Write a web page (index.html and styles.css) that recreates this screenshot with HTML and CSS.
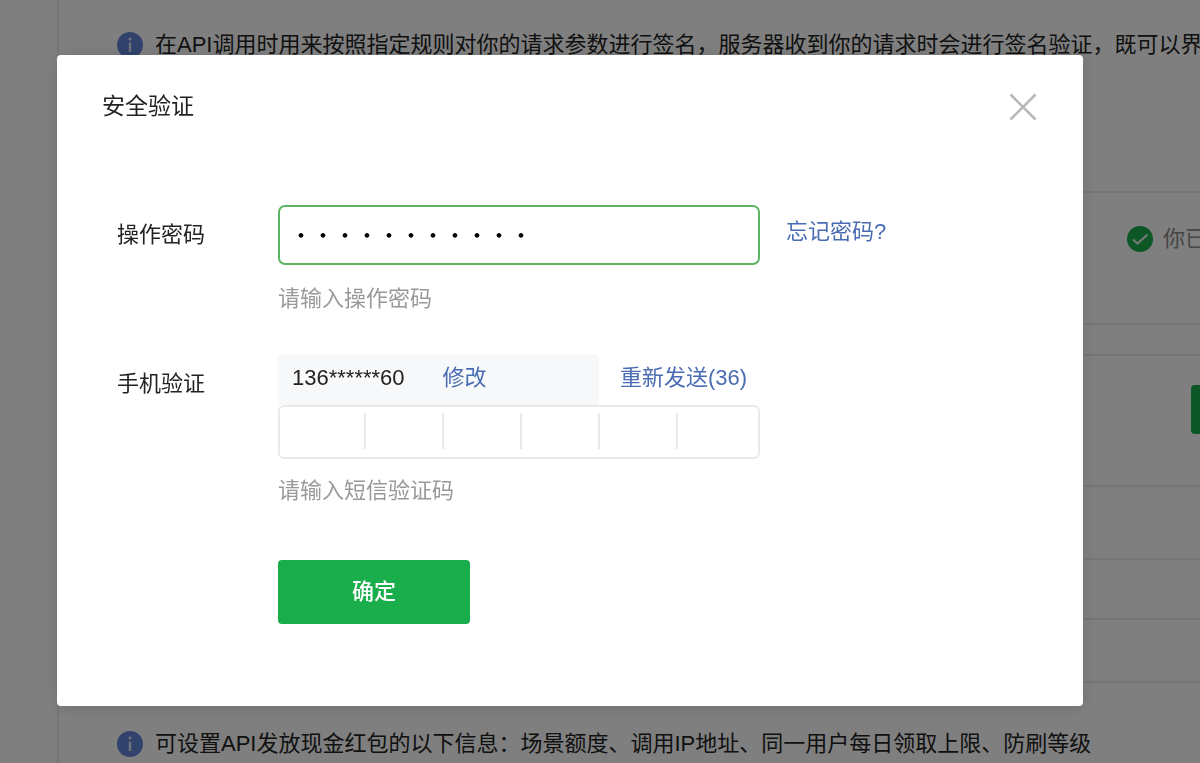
FILE: index.html
```html
<!DOCTYPE html>
<html lang="zh-CN">
<head>
  <meta charset="UTF-8">
  <title>安全验证</title>
  <meta name="viewport" content="width=device-width, initial-scale=1.0">
  <link rel="stylesheet" href="styles.css">
</head>
<body>

  <main class="page">
    <p class="tip">
      <svg class="icon" viewBox="0 0 26 26">
        <circle cx="13" cy="13" r="13" fill="#6287d8"/>
        <circle cx="13" cy="7" r="1.5" fill="#dde5f6"/>
        <path d="M13 10.5v9.5" stroke="#dde5f6" stroke-width="2.4"/>
      </svg>
      <span>在API调用时用来按照指定规则对你的请求参数进行签名，服务器收到你的请求时会进行签名验证，既可以界定</span>
    </p>

    <section class="box">
      <div class="row row-status">
        <div class="status">
          <svg class="icon" viewBox="0 0 26 26">
            <circle cx="13" cy="13" r="13" fill="#1aad4b"/>
            <path d="M6 13.5l4.5 4 10-9" fill="none" stroke="#e4f5ea" stroke-width="2.2"/>
          </svg>
          <span>你已安装</span>
        </div>
      </div>
    </section>

    <section class="box">
      <div class="row row-action"><button class="btn-side" type="button" aria-label="设置"></button></div>
      <div class="row row-tall"></div>
      <div class="row row-mid"></div>
      <div class="row row-last"></div>
    </section>

    <p class="tip">
      <svg class="icon" viewBox="0 0 26 26">
        <circle cx="13" cy="13" r="13" fill="#6287d8"/>
        <circle cx="13" cy="7" r="1.5" fill="#dde5f6"/>
        <path d="M13 10.5v9.5" stroke="#dde5f6" stroke-width="2.4"/>
      </svg>
      <span>可设置API发放现金红包的以下信息：场景额度、调用IP地址、同一用户每日领取上限、防刷等级</span>
    </p>
  </main>

  <div class="mask">
    <div class="dialog" role="dialog" aria-labelledby="title">
      <div class="dialog-head">
        <h1 id="title">安全验证</h1>
        <button class="close" type="button" aria-label="关闭">
          <svg viewBox="0 0 28 28">
            <path d="M1.5 1.5l25 25M26.5 1.5l-25 25" stroke="#b8b8b8" stroke-width="2.6"/>
          </svg>
        </button>
      </div>

      <form class="form">
        <div class="field">
          <label class="label" for="password">操作密码</label>
          <div class="control">
            <div class="line">
              <input class="password" type="password" id="password" value="abcdefghijk">
              <a class="forgot" href="#">忘记密码?</a>
            </div>
            <p class="hint">请输入操作密码</p>
          </div>
        </div>

        <div class="field">
          <label class="label" for="code1">手机验证</label>
          <div class="control">
            <div class="line">
              <div class="phone">
                <span>136******60</span>
                <a href="#">修改</a>
              </div>
              <a class="resend" href="#">重新发送(36)</a>
            </div>
            <div class="code">
              <input type="text" id="code1" maxlength="1">
              <input type="text" maxlength="1" aria-label="第2位">
              <input type="text" maxlength="1" aria-label="第3位">
              <input type="text" maxlength="1" aria-label="第4位">
              <input type="text" maxlength="1" aria-label="第5位">
              <input type="text" maxlength="1" aria-label="第6位">
            </div>
            <p class="hint">请输入短信验证码</p>
            <button class="submit" type="submit">确定</button>
          </div>
        </div>
      </form>
    </div>
  </div>

</body>
</html>
```
FILE: styles.css
```css
* {
  box-sizing: border-box;
}

body {
  margin: 0;
  background: #fff;
  color: #222;
  font-family: "Liberation Sans", "Noto Sans CJK SC", sans-serif;
  font-size: 22px;
  line-height: 30px;
  overflow: hidden;
}

h1,
p {
  margin: 0;
}

a {
  color: #4a6cb3;
  text-decoration: none;
}

button {
  font-family: inherit;
  cursor: pointer;
}

.icon {
  flex: none;
  width: 26px;
  height: 26px;
}

/* page behind the dialog */
.page {
  margin-left: 57px;
  padding-top: 30px;
  border-left: 2px solid #ececec;
  height: 100vh;
  overflow: hidden;
}

.tip {
  display: flex;
  align-items: center;
  gap: 12px;
  padding-left: 58px;
  white-space: nowrap;
}

.box {
  border-top: 2px solid #ececec;
}

.tip + .box {
  margin-top: 131px;
  border-bottom: 2px solid #ececec;
}

.box + .box {
  margin-top: 29px;
}

.box + .tip {
  margin-top: 46px;
}

.row {
  display: grid;
}

.row + .row {
  border-top: 2px solid #ececec;
}

.row-status {
  grid-template-columns: 1fr 73px;
  height: 130px;
  padding-top: 31px;
}

.status {
  grid-column: 2;
  display: flex;
  align-items: center;
  gap: 10px;
  height: 30px;
  color: #8d8d8d;
  white-space: nowrap;
}

.row-action {
  grid-template-columns: 1fr 9px;
  height: 129px;
  padding-top: 29px;
}

.btn-side {
  grid-column: 2;
  width: 120px;
  height: 49px;
  border: 0;
  border-radius: 4px;
  background: #1aad4b;
}

.row-tall {
  height: 73px;
}

.row-mid {
  height: 60px;
}

.row-last {
  height: 65px;
  border-bottom: 2px solid #ececec;
}

/* dialog */
.mask {
  position: fixed;
  inset: 0;
  padding: 55px 117px 57px 57px;
  background: rgba(0, 0, 0, 0.5);
}

.dialog {
  padding: 36px 45px 82px;
  background: #fff;
  border-radius: 4px;
  box-shadow: 0 2px 16px rgba(0, 0, 0, 0.12);
}

.dialog-head {
  display: flex;
  justify-content: space-between;
  align-items: center;
}

.dialog-head h1 {
  font-size: 23px;
  font-weight: normal;
}

.close {
  display: flex;
  padding: 2px 1px 0 0;
  border: 0;
  background: none;
}

.close svg {
  width: 28px;
  height: 28px;
}

.form {
  display: flex;
  flex-direction: column;
  gap: 40px;
  padding: 84px 0 0 15px;
}

.field {
  display: flex;
}

.label {
  flex: none;
  width: 161px;
  padding-top: 15px;
}

.control {
  flex: 1;
}

.line {
  display: flex;
}

.password {
  width: 482px;
  height: 60px;
  padding: 0 10px 5px;
  border: 2px solid #5cb563;
  border-radius: 7px;
  outline: 0;
  color: #000;
  font-family: "Noto Sans CJK SC", sans-serif;
  font-size: 22px;
}

.forgot {
  padding: 12px 0 0 26px;
}

.hint {
  margin-top: 19px;
  color: #999;
}

.phone {
  display: flex;
  gap: 38px;
  width: 321px;
  height: 51px;
  padding: 9px 14px;
  border-radius: 5px 5px 0 0;
  background: #f6f8f9;
}

.resend {
  padding: 9px 0 0 21px;
}

.code {
  display: grid;
  grid-template-columns: 84px repeat(4, 78px) 1fr;
  width: 482px;
  height: 54px;
  padding: 6px 0 8px;
  border: 2px solid #e9e9eb;
  border-radius: 6px;
}

.code input {
  width: 100%;
  min-width: 0;
  padding: 0;
  border: 0;
  outline: 0;
  background: none;
  font-size: 22px;
  text-align: center;
}

.code input + input {
  border-left: 2px solid #e9e9eb;
}

.code + .hint {
  margin-top: 17px;
}

.submit {
  display: block;
  width: 192px;
  height: 64px;
  margin-top: 54px;
  padding: 0 0 6px;
  border: 0;
  border-radius: 4px;
  background: #1aad4b;
  color: #fff;
  font-size: 22px;
  font-weight: 500;
}
```
